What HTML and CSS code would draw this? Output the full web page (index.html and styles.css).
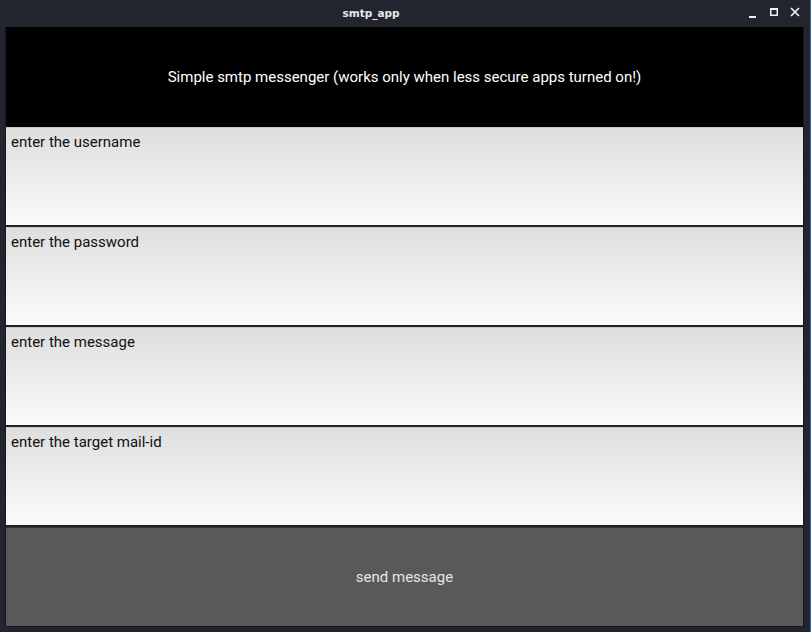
FILE: index.html
```html
<!DOCTYPE html>
<html>
<head>
<meta charset="utf-8">
<link rel="stylesheet" href="styles.css">
</head>
<body>
<div class="window">
  <div class="titlebar">
    <span class="title">smtp_app</span>
    <div class="controls">
      <svg class="ctl" width="14" height="14" viewBox="0 0 14 14"><rect x="3" y="11" width="7" height="2" fill="#f2f2f2"/></svg>
      <svg class="ctl" width="14" height="14" viewBox="0 0 14 14"><rect x="3.75" y="3.75" width="6.5" height="6.5" fill="none" stroke="#f2f2f2" stroke-width="1.5"/><rect x="3" y="3" width="8" height="2" fill="#f2f2f2"/></svg>
      <svg class="ctl" width="14" height="14" viewBox="0 0 14 14"><path d="M3 3 L11 11 M11 3 L3 11" stroke="#f2f2f2" stroke-width="1.7"/></svg>
    </div>
  </div>
  <div class="content">
    <div class="header">Simple smtp messenger (works only when less secure apps turned on!)</div>
    <div class="field">enter the username</div>
    <div class="field">enter the password</div>
    <div class="field">enter the message</div>
    <div class="field">enter the target mail-id</div>
    <div class="button">send message</div>
  </div>
</div>
</body>
</html>
```
FILE: styles.css
```css
html, body {
  margin: 0;
  padding: 0;
  width: 811px;
  height: 632px;
  overflow: hidden;
  background: #22252d;
}
.window {
  width: 811px;
  height: 632px;
  display: flex;
  flex-direction: column;
  box-sizing: border-box;
  border-right: 1px solid #2f6fa8;
  background: #22252d;
}
.titlebar {
  height: 27px;
  flex: none;
  display: flex;
  align-items: center;
  justify-content: center;
  position: relative;
  padding-right: 68px;
}
.title {
  font-family: "DejaVu Sans", sans-serif;
  font-weight: bold;
  font-size: 10.5px;
  color: #e8e8e8;
  margin-top: -1px;
}
.controls {
  position: absolute;
  right: 8px;
  top: 5px;
  display: flex;
  gap: 7px;
}
.content {
  flex: 1;
  margin: 0 6px 5px 5px;
  display: flex;
  flex-direction: column;
  border-left: 1px solid #15171b;
  border-right: 1px solid #15171b;
  border-bottom: 1px solid #15171b;
  font-family: Roboto, "Noto Sans", sans-serif;
}
.header {
  height: 100px;
  flex: none;
  background: #000;
  color: #fff;
  font-size: 15px;
  display: flex;
  align-items: center;
  justify-content: center;
}
.field {
  flex: none;
  border-top: 1px solid #c8c8c8;
  border-bottom: 1px solid #1c1c1c;
  background: linear-gradient(#dedede, #fbfbfb);
  color: #111;
  font-size: 15px;
  padding: 0 5px;
  line-height: 28px;
  height: 97px;
  margin-bottom: 1px;
}
.field:last-of-type {
  margin-bottom: 0;
}
.button {
  flex: 1;
  background: #595959;
  color: #e6e6e6;
  font-size: 15px;
  display: flex;
  align-items: center;
  justify-content: center;
  border-top: 1px solid #333;
}
```
